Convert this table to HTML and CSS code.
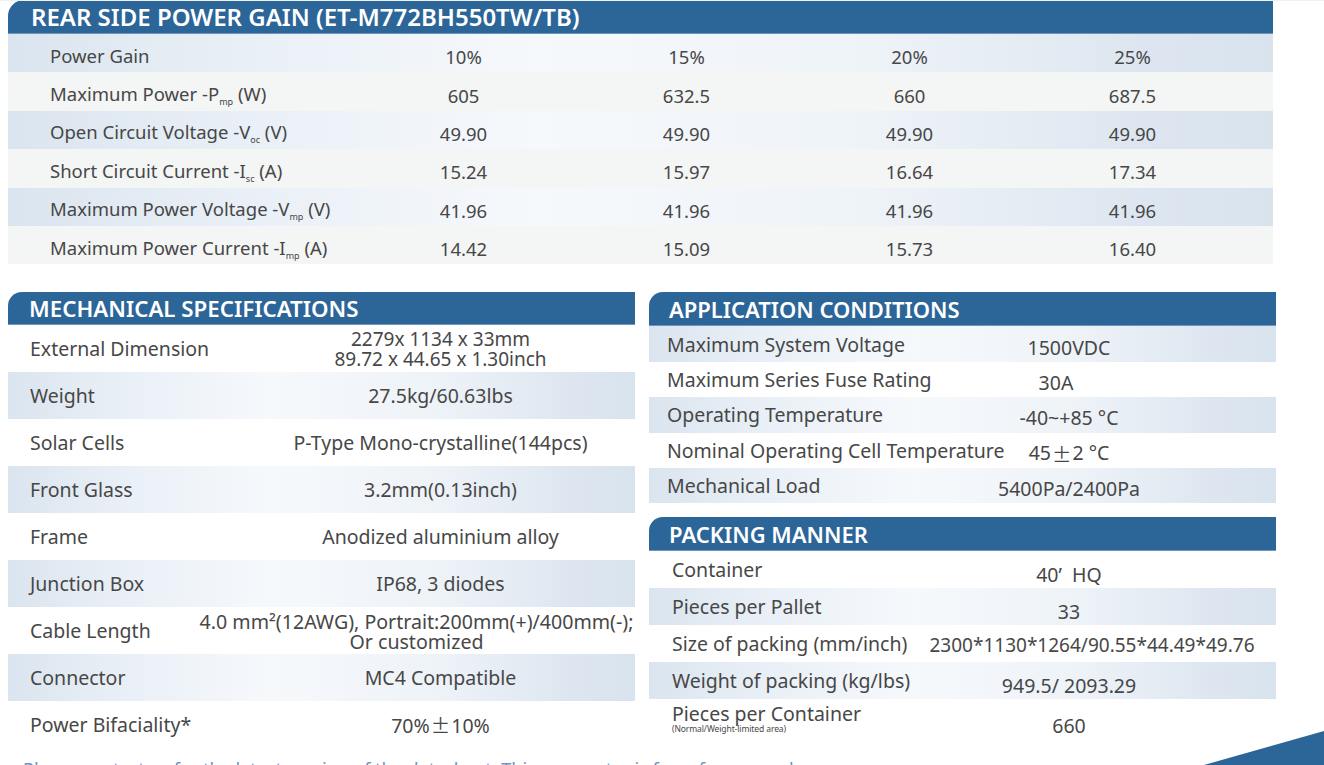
FILE: index.html
```html
<!DOCTYPE html>
<html lang="en">
<head>
<meta charset="utf-8">
<title>ET-M772BH550TW/TB Datasheet</title>
<link rel="stylesheet" href="styles.css">
</head>
<body>
<div class="page">
  <section class="gain">
    <div class="head head--gain">REAR SIDE POWER GAIN (ET-M772BH550TW/TB)</div>
    <div class="gain-row row--blue"><span class="gain-label">Power Gain</span><span class="gain-val">10%</span><span class="gain-val">15%</span><span class="gain-val">20%</span><span class="gain-val">25%</span></div>
    <div class="gain-row row--grey"><span class="gain-label">Maximum Power -P<sub class="sub">mp</sub> (W)</span><span class="gain-val">605</span><span class="gain-val">632.5</span><span class="gain-val">660</span><span class="gain-val">687.5</span></div>
    <div class="gain-row row--blue"><span class="gain-label">Open Circuit Voltage -V<sub class="sub">oc</sub> (V)</span><span class="gain-val">49.90</span><span class="gain-val">49.90</span><span class="gain-val">49.90</span><span class="gain-val">49.90</span></div>
    <div class="gain-row row--grey"><span class="gain-label">Short Circuit Current -I<sub class="sub">sc</sub> (A)</span><span class="gain-val">15.24</span><span class="gain-val">15.97</span><span class="gain-val">16.64</span><span class="gain-val">17.34</span></div>
    <div class="gain-row row--blue"><span class="gain-label">Maximum Power Voltage -V<sub class="sub">mp</sub> (V)</span><span class="gain-val">41.96</span><span class="gain-val">41.96</span><span class="gain-val">41.96</span><span class="gain-val">41.96</span></div>
    <div class="gain-row row--grey"><span class="gain-label">Maximum Power Current -I<sub class="sub">mp</sub> (A)</span><span class="gain-val">14.42</span><span class="gain-val">15.09</span><span class="gain-val">15.73</span><span class="gain-val">16.40</span></div>
  </section>

  <div class="lower">
    <section class="mech">
      <div class="head head--mech">MECHANICAL SPECIFICATIONS</div>
      <div class="mech-row"><span class="mech-label">External Dimension</span><span class="mech-val mech-val--two">2279x 1134 x 33mm<br>89.72 x 44.65 x 1.30inch</span></div>
      <div class="mech-row row--blue"><span class="mech-label">Weight</span><span class="mech-val">27.5kg/60.63lbs</span></div>
      <div class="mech-row"><span class="mech-label">Solar Cells</span><span class="mech-val">P-Type Mono-crystalline(144pcs)</span></div>
      <div class="mech-row row--blue"><span class="mech-label">Front Glass</span><span class="mech-val">3.2mm(0.13inch)</span></div>
      <div class="mech-row"><span class="mech-label">Frame</span><span class="mech-val">Anodized aluminium alloy</span></div>
      <div class="mech-row row--blue"><span class="mech-label">Junction Box</span><span class="mech-val">IP68, 3 diodes</span></div>
      <div class="mech-row"><span class="mech-label">Cable Length</span><span class="mech-val mech-val--two mech-val--wide">4.0 mm²(12AWG), Portrait:200mm(+)/400mm(-);<br>Or customized</span></div>
      <div class="mech-row row--blue"><span class="mech-label">Connector</span><span class="mech-val">MC4 Compatible</span></div>
      <div class="mech-row"><span class="mech-label">Power Bifaciality*</span><span class="mech-val">70%<span class="pm">±</span>10%</span></div>
      <p class="note">Please contact us for the latest version of the datasheet. This parameter is for reference only.</p>
    </section>

    <div class="side">
      <section class="app">
        <div class="head head--side">APPLICATION CONDITIONS</div>
        <div class="side-row row--blue"><span class="side-label">Maximum System Voltage</span><span class="side-val">1500VDC</span></div>
        <div class="side-row"><span class="side-label">Maximum Series Fuse Rating</span><span class="side-val side-val--left">30A</span></div>
        <div class="side-row row--blue"><span class="side-label">Operating Temperature</span><span class="side-val">-40~+85 °C</span></div>
        <div class="side-row"><span class="side-label">Nominal Operating Cell Temperature</span><span class="side-val">45<span class="pm">±</span>2 °C</span></div>
        <div class="side-row row--blue"><span class="side-label">Mechanical Load</span><span class="side-val">5400Pa/2400Pa</span></div>
      </section>

      <section class="pack">
        <div class="head head--side">PACKING MANNER</div>
        <div class="side-row side-row--pack"><span class="side-label side-label--pack">Container</span><span class="side-val side-val--low">40’&nbsp; HQ</span></div>
        <div class="side-row side-row--pack row--blue"><span class="side-label side-label--pack">Pieces per Pallet</span><span class="side-val side-val--low">33</span></div>
        <div class="side-row side-row--pack"><span class="side-label side-label--pack">Size of packing (mm/inch)</span><span class="side-val side-val--right">2300*1130*1264/90.55*44.49*49.76</span></div>
        <div class="side-row side-row--pack row--blue"><span class="side-label side-label--pack">Weight of packing (kg/lbs)</span><span class="side-val side-val--low">949.5/ 2093.29</span></div>
        <div class="side-row side-row--pack side-row--last"><span class="side-label side-label--pack side-label--stack"><span>Pieces per Container</span><small class="tiny">(Normal/Weight-limited area)</small></span><span class="side-val side-val--low">660</span></div>
      </section>
    </div>
  </div>
</div>
<svg class="corner" width="120" height="34" viewBox="0 0 120 34" aria-hidden="true"><polygon points="0,34 120,0 120,34" fill="#2c6598"/></svg>
</body>
</html>
```

FILE: styles.css
```css
* { box-sizing: border-box; }

html, body {
  margin: 0;
  padding: 0;
  background: #ffffff;
}

body {
  font-family: "Noto Sans", "Open Sans", sans-serif;
  color: #474747;
  overflow: hidden;
  height: 765px;
  border-top: 1px solid #eef0f2;
}

.page {
  padding-left: 8px;
  width: 1290px;
}

.head {
  background: #2c6598;
  color: #ffffff;
  font-weight: 600;
  display: flex;
  align-items: center;
  border-bottom: 1px solid #6d95bd;
  white-space: nowrap;
}

.head--gain {
  height: 34px;
  font-size: 24px;
  padding-left: 23px;
  border-top-left-radius: 16px;
  margin-top: -1px;
}

.head--mech {
  height: 33px;
  font-size: 22.3px;
  padding-left: 21px;
  border-top-left-radius: 14px;
}

.head--side {
  height: 34px;
  font-size: 22px;
  padding-left: 20px;
  border-top-left-radius: 14px;
}

.row--blue {
  background: linear-gradient(90deg, #dbe5ef 0%, #eaf0f7 20%, #f6f9fc 42%, #eef3f8 68%, #dde6f0 90%, #d9e3ee 100%);
}

.row--grey {
  background: #f4f5f5;
}

/* ---------- power gain ---------- */
.gain {
  width: 1265px;
}

.gain-row {
  display: grid;
  grid-template-columns: 344px repeat(4, 223px) 1fr;
  align-items: center;
  height: 38.4px;
  font-size: 18.5px;
  white-space: nowrap;
}

.gain-label {
  padding-left: 42px;
  padding-top: 4px;
}

.gain-val {
  text-align: center;
  padding-top: 7px;
}

.sub {
  font-size: 9px;
  vertical-align: -4px;
  line-height: 0;
}

/* ---------- lower blocks ---------- */
.lower {
  display: flex;
  gap: 14px;
  margin-top: 28px;
}

.mech {
  width: 627px;
  flex: none;
}

.mech-row {
  display: grid;
  grid-template-columns: 190px 437px;
  align-items: center;
  height: 47px;
  font-size: 19.5px;
  white-space: nowrap;
}

.mech-label {
  padding-left: 22px;
}

.mech-val {
  text-align: center;
  padding-left: 48px;
}

.mech-val--two {
  font-size: 19px;
  line-height: 20px;
}

.mech-val--wide {
  padding-left: 0;
  font-size: 19.6px;
  line-height: 20px;
  padding-top: 2px;
}

.pm {
  font-family: "Noto Sans CJK SC", "Noto Sans", sans-serif;
  margin: 0 1px;
}

.note {
  margin: 9px 0 0 15px;
  font-size: 18px;
  color: #6f92c2;
  white-space: nowrap;
}

.side {
  width: 627px;
  flex: none;
  display: flex;
  flex-direction: column;
  gap: 14px;
}

.side-row {
  display: flex;
  align-items: center;
  height: 35.4px;
  font-size: 19.5px;
  white-space: nowrap;
}

.side-row--pack {
  height: 37px;
}

.side-row--last {
  height: 44px;
}

.side-label {
  flex: 0 0 360px;
  padding-left: 18px;
}

.side-label--pack {
  padding-left: 23px;
  padding-bottom: 1px;
}

.side-label--stack {
  display: flex;
  flex-direction: column;
  line-height: 21px;
  padding-bottom: 6px;
}

.tiny {
  font-size: 8.5px;
  line-height: 10px;
  letter-spacing: -0.1px;
}

.side-val {
  flex: 0 0 120px;
  min-width: 0;
  display: flex;
  justify-content: center;
  padding-top: 6px;
}

.side-val--left {
  margin-left: -13px;
}

.side-val--low {
  padding-top: 9px;
}

.side-val--right {
  margin-left: 23px;
  padding-top: 3px;
  font-size: 19px;
}

.corner {
  position: fixed;
  right: 0;
  bottom: 0;
  display: block;
}
```
